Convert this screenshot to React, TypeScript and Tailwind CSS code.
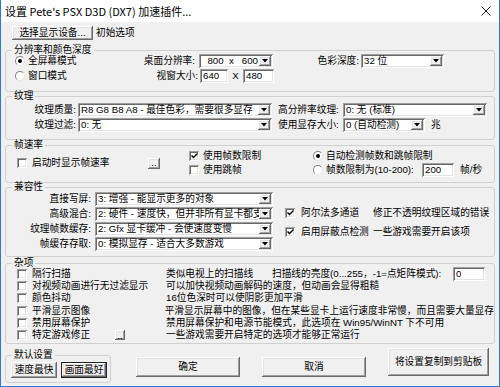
import React from 'react';

const raised =
  'shadow-[inset_-1px_-1px_0_#696969,inset_1px_1px_0_#ffffff,inset_-2px_-2px_0_#a0a0a0,inset_2px_2px_0_#e3e3e3]';
const sunken =
  'shadow-[inset_1px_1px_0_#a0a0a0,inset_-1px_-1px_0_#ffffff,inset_2px_2px_0_#696969,inset_-2px_-2px_0_#e3e3e3]';

function Btn({ className = '', children, def = false }: { className?: string; children: React.ReactNode; def?: boolean }) {
  return (
    <button
      type="button"
      className={`flex shrink-0 items-center justify-center bg-[#f0f0f0] ${def ? 'border border-[#222]' : ''} ${raised} ${className}`}
    >
      {children}
    </button>
  );
}

function Combo({ className = '', text }: { className?: string; text: string }) {
  return (
    <div className={`flex h-[14px] shrink-0 items-center bg-white p-[2px] ${sunken} ${className}`}>
      <span className="flex-1 overflow-hidden whitespace-pre pl-[1px]">{text}</span>
      <span className={`flex h-[10px] w-[12px] items-center justify-center bg-[#f0f0f0] ${raised}`}>
        <svg width="6" height="4" viewBox="0 0 6 4">
          <path d="M0 0H6L3 3.5Z" fill="#000" />
        </svg>
      </span>
    </div>
  );
}

function Field({ className = '', text }: { className?: string; text: string }) {
  return (
    <div className={`flex h-[14px] shrink-0 items-center bg-white px-[3px] ${sunken} ${className}`}>
      <span className="overflow-hidden whitespace-pre">{text}</span>
    </div>
  );
}

function Check({ on = false }: { on?: boolean }) {
  return (
    <span className={`flex h-[10px] w-[10px] shrink-0 items-center justify-center bg-white ${sunken}`}>
      {on && (
        <svg width="7" height="6" viewBox="0 0 7 6">
          <path d="M0.5 2.5L2.5 4.5L6.5 0.5" stroke="#000" strokeWidth="1.4" fill="none" />
        </svg>
      )}
    </span>
  );
}

function Radio({ on = false }: { on?: boolean }) {
  return (
    <span className="flex h-[10px] w-[10px] shrink-0 items-center justify-center rounded-full border border-t-[#808080] border-l-[#808080] border-r-[#e3e3e3] border-b-[#e3e3e3] bg-white">
      {on && <span className="h-[4px] w-[4px] rounded-full bg-black" />}
    </span>
  );
}

function Group({ title, className = '', children }: { title: string; className?: string; children: React.ReactNode }) {
  return (
    <fieldset className={`min-w-0 shrink-0 rounded-[3px] border border-[#d0d0d0] ${className}`}>
      <legend className="ml-[6px] px-[2px] leading-[6px]">{title}</legend>
      {children}
    </fieldset>
  );
}

const misc = [
  { label: '隔行扫描', desc: '' },
  { label: '对视频动画进行无过滤显示', desc: '可以加快视频动画解码的速度，但动画会显得粗糙' },
  { label: '颜色抖动', desc: '16位色深时可以使阴影更加平滑' },
  { label: '平滑显示图像', desc: '平滑显示屏幕中的图像，但在某些显卡上运行速度非常慢，而且需要大量显存' },
  { label: '禁用屏幕保护', desc: '禁用屏幕保护和电源节能模式，此选项在 Win95/WinNT 下不可用' },
  { label: '特定游戏修正', desc: '一些游戏需要开启特定的选项才能够正常运行' },
];

export default function App() {
  return (
    <div className="flex h-[387px] w-[500px] flex-col border-x border-b border-[#2b7bd3] bg-[#f0f0f0] font-['Liberation_Sans','Noto_Sans_CJK_SC',sans-serif] text-[9.7px] leading-[12px] text-black">
      {/* title bar */}
      <div className="flex h-[22px] shrink-0 items-center justify-between bg-white pl-[4px] pr-[8px]">
        <span className="font-['Noto_Sans_CJK_SC',sans-serif] text-[11px]">设置 Pete's PSX D3D (DX7) 加速插件...</span>
        <svg width="10" height="10" viewBox="0 0 10 10">
          <path d="M0.5 0.5L9.5 9.5M9.5 0.5L0.5 9.5" stroke="#222" strokeWidth="1" />
        </svg>
      </div>

      <div className="flex flex-1 flex-col px-[4px] pt-[4px]">
        <div className="flex h-[14px] items-center">
          <Btn className="ml-[7px] h-[14px] w-[81px]">选择显示设备...</Btn>
          <span className="ml-[3px]">初始选项</span>
        </div>

        {/* resolution */}
        <Group title="分辨率和颜色深度" className="mt-[7px] h-[45px]">
          <div className="flex h-[15px] items-center">
            <div className="flex w-[130px] items-center gap-[3px] pl-[9px]">
              <Radio on />
              <span>全屏幕模式</span>
            </div>
            <span className="w-[63px] pr-[4px] text-right">桌面分辨率:</span>
            <Combo className="w-[74px]" text="  800  x   600" />
            <span className="w-[88px] pr-[2px] text-right">色彩深度:</span>
            <Combo className="w-[83px]" text="32 位" />
          </div>
          <div className="flex h-[15px] items-center">
            <div className="flex w-[130px] items-center gap-[3px] pl-[9px]">
              <Radio />
              <span>窗口模式</span>
            </div>
            <span className="w-[64px] pr-[2px] text-right">视窗大小:</span>
            <Field className="w-[28px]" text="640" />
            <span className="w-[15px] text-center">X</span>
            <Field className="w-[31px]" text="480" />
          </div>
        </Group>

        {/* textures */}
        <Group title="纹理" className="mt-[1px] h-[47px]">
          <div className="pt-[3px]">
            <div className="flex h-[15px] items-center">
              <span className="w-[72px] pr-[2px] text-right">纹理质量:</span>
              <Combo className="w-[194px]" text="R8 G8 B8 A8 - 最佳色彩，需要很多显存" />
              <span className="ml-[6px] w-[65px]">高分辨率纹理:</span>
              <Combo className="w-[144px]" text="0: 无 (标准)" />
            </div>
            <div className="flex h-[15px] items-center">
              <span className="w-[72px] pr-[2px] text-right">纹理过滤:</span>
              <Combo className="w-[194px]" text="0: 无" />
              <span className="ml-[6px] w-[65px]">使用显存大小:</span>
              <Combo className="w-[82px]" text="0 (自动检测)" />
              <span className="ml-[6px]">兆</span>
            </div>
          </div>
        </Group>

        {/* frame rate */}
        <Group title="帧速率" className="mt-[2px] h-[41px]">
          <div className="flex pt-[1px]">
            <div className="flex w-[183px] items-center pl-[11px]">
              <div className="flex w-[131px] items-center gap-[5px]">
                <Check />
                <span>启动时显示帧速率</span>
              </div>
              <Btn className="h-[11px] w-[12px] leading-[6px]">..</Btn>
            </div>
            <div className="flex w-[124px] flex-col">
              <div className="flex h-[14px] items-center gap-[4px]">
                <Check on />
                <span>使用帧数限制</span>
              </div>
              <div className="flex h-[14px] items-center gap-[4px]">
                <Check />
                <span>使用跳帧</span>
              </div>
            </div>
            <div className="flex flex-col">
              <div className="flex h-[14px] items-center gap-[3px]">
                <Radio on />
                <span>自动检测帧数和跳帧限制</span>
              </div>
              <div className="flex h-[14px] items-center">
                <div className="flex w-[109px] items-center gap-[3px]">
                  <Radio />
                  <span>帧数限制为(10-200):</span>
                </div>
                <Field className="h-[13px] w-[32px]" text="200" />
                <span className="ml-[6px]">帧/秒</span>
              </div>
            </div>
          </div>
        </Group>

        {/* compatibility */}
        <Group title="兼容性" className="mt-[1px] h-[73px]">
          <div className="flex pt-[1px]">
            <div className="flex flex-col">
              {[
                ['直接写屏:', '3: 增强 - 能显示更多的对象'],
                ['高级混合:', '2: 硬件 - 速度快，但并非所有显卡都支持'],
                ['纹理帧数缓存:', '2: Gfx 显卡缓冲 - 会使速度变慢'],
                ['帧缓存存取:', '0: 模拟显存 - 适合大多数游戏'],
              ].map(([l, v]) => (
                <div key={l} className="flex h-[15px] items-center">
                  <span className="w-[89px] pr-[4px] text-right">{l}</span>
                  <Combo className="w-[178px]" text={v} />
                </div>
              ))}
            </div>
            <div className="ml-[12px] flex flex-col gap-[5px] pt-[15px]">
              <div className="flex h-[14px] items-center">
                <div className="flex w-[88px] items-center gap-[6px]">
                  <Check on />
                  <span>阿尔法多通道</span>
                </div>
                <span>修正不透明纹理区域的错误</span>
              </div>
              <div className="flex h-[14px] items-center">
                <div className="flex w-[88px] items-center gap-[6px]">
                  <Check on />
                  <span>启用屏蔽点检测</span>
                </div>
                <span>一些游戏需要开启该项</span>
              </div>
            </div>
          </div>
        </Group>

        {/* misc */}
        <Group title="杂项" className="mt-[3px] h-[84px]">
          <div className="pt-[2px]">
            {misc.map((m, i) => (
              <div key={m.label} className="flex h-[12.2px] items-center">
                <div className="flex w-[160px] items-center pl-[11px]">
                  <div className="flex w-[98px] items-center gap-[5px]">
                    <Check />
                    <span className="whitespace-nowrap">{m.label}</span>
                  </div>
                  {i === 5 && <Btn className="h-[10px] w-[10px] leading-[5px]">..</Btn>}
                </div>
                {i === 0 ? (
                  <div className="flex items-center">
                    <span className="w-[106px]">类似电视上的扫描线</span>
                    <span className="w-[181px] whitespace-nowrap">扫描线的亮度(0...255，-1=点矩阵模式):</span>
                    <Field className="h-[13px] w-[32px]" text="0" />
                  </div>
                ) : (
                  <span className="whitespace-nowrap">{m.desc}</span>
                )}
              </div>
            ))}
          </div>
        </Group>

        {/* bottom row */}
        <div className="mt-[4px] flex items-start">
          <Group title="默认设置" className="mt-[4px] h-[31px] w-[106px]">
            <div className="flex pt-[4px]">
              <Btn className="ml-[5px] h-[16px] w-[46px]">速度最快</Btn>
              <Btn def className="ml-[4px] h-[16px] w-[46px]">画面最好</Btn>
            </div>
          </Group>
          <Btn className="ml-[25px] mt-[9px] h-[20px] w-[104px]">确定</Btn>
          <Btn className="ml-[22px] mt-[9px] h-[20px] w-[104px]">取消</Btn>
          <Btn className="ml-[22px] h-[28px] w-[101px]">将设置复制到剪贴板</Btn>
        </div>
      </div>
    </div>
  );
}
